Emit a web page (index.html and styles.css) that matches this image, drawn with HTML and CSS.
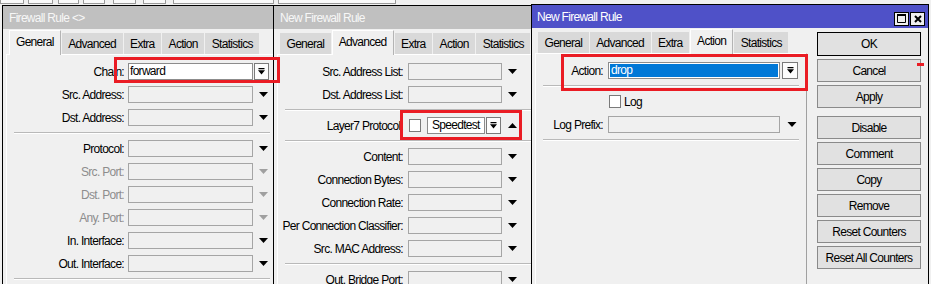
FILE: index.html
```html
<!DOCTYPE html>
<html>
<head>
<meta charset="utf-8">
<title>Firewall Rule</title>
<link rel="stylesheet" href="styles.css">
</head>
<body>
<div class="desktop">
  <div class="toolbar">
    <span class="tb tb-a"></span><span class="tb tb-b"></span><span class="tb tb-c"></span><span class="tb tb-d"></span>
    <span class="tb tb-e"></span><span class="tb tb-f"></span><span class="tb tb-g"></span><span class="tb tb-h"></span>
  </div>

  <!-- Window 1 -->
  <div class="win w1">
    <div class="titlebar"><span class="title">Firewall Rule &lt;&gt;</span></div>
    <div class="winbody">
      <div class="main">
        <div class="tabs">
          <span class="tab active">General</span><span class="tab">Advanced</span><span class="tab">Extra</span><span class="tab">Action</span><span class="tab">Statistics</span>
        </div>
        <div class="panel">
          <div class="row"><span class="lab">Chain:</span><span class="fld val">forward</span><span class="combo"><svg class="cicon" viewBox="0 0 7 7"><path d="M0.5 0h6v1.2h-6zM0 2.2h7L3.5 6.6z"/></svg></span></div>
          <div class="row"><span class="lab">Src. Address:</span><span class="fld"></span><svg class="arrow" viewBox="0 0 9 5"><path d="M0 0H9L4.5 5Z"/></svg></div>
          <div class="row"><span class="lab">Dst. Address:</span><span class="fld"></span><svg class="arrow" viewBox="0 0 9 5"><path d="M0 0H9L4.5 5Z"/></svg></div>
          <div class="sep"></div>
          <div class="row"><span class="lab">Protocol:</span><span class="fld"></span><svg class="arrow" viewBox="0 0 9 5"><path d="M0 0H9L4.5 5Z"/></svg></div>
          <div class="row"><span class="lab dis">Src. Port:</span><span class="fld"></span><svg class="arrow dis" viewBox="0 0 9 5"><path d="M0 0H9L4.5 5Z"/></svg></div>
          <div class="row"><span class="lab dis">Dst. Port:</span><span class="fld"></span><svg class="arrow dis" viewBox="0 0 9 5"><path d="M0 0H9L4.5 5Z"/></svg></div>
          <div class="row"><span class="lab dis">Any. Port:</span><span class="fld"></span><svg class="arrow dis" viewBox="0 0 9 5"><path d="M0 0H9L4.5 5Z"/></svg></div>
          <div class="row"><span class="lab">In. Interface:</span><span class="fld"></span><svg class="arrow" viewBox="0 0 9 5"><path d="M0 0H9L4.5 5Z"/></svg></div>
          <div class="row"><span class="lab">Out. Interface:</span><span class="fld"></span><svg class="arrow" viewBox="0 0 9 5"><path d="M0 0H9L4.5 5Z"/></svg></div>
          <div class="sep"></div>
        </div>
      </div>
    </div>
  </div>

  <!-- Window 2 -->
  <div class="win w2">
    <div class="titlebar"><span class="title">New Firewall Rule</span></div>
    <div class="winbody">
      <div class="main">
        <div class="tabs">
          <span class="tab">General</span><span class="tab active">Advanced</span><span class="tab">Extra</span><span class="tab">Action</span><span class="tab">Statistics</span>
        </div>
        <div class="panel">
          <div class="row"><span class="lab">Src. Address List:</span><span class="fld"></span><svg class="arrow" viewBox="0 0 9 5"><path d="M0 0H9L4.5 5Z"/></svg></div>
          <div class="row"><span class="lab">Dst. Address List:</span><span class="fld"></span><svg class="arrow" viewBox="0 0 9 5"><path d="M0 0H9L4.5 5Z"/></svg></div>
          <div class="sep"></div>
          <div class="row">
            <span class="lab">Layer7 Protocol:</span>
            <span class="group"><span class="chk"></span><span class="fld val short">Speedtest</span><span class="combo"><svg class="cicon" viewBox="0 0 7 7"><path d="M0.5 0h6v1.2h-6zM0 2.2h7L3.5 6.6z"/></svg></span></span>
            <svg class="arrow" viewBox="0 0 9 5"><path d="M0 5H9L4.5 0Z"/></svg>
          </div>
          <div class="sep"></div>
          <div class="row"><span class="lab">Content:</span><span class="fld"></span><svg class="arrow" viewBox="0 0 9 5"><path d="M0 0H9L4.5 5Z"/></svg></div>
          <div class="row"><span class="lab">Connection Bytes:</span><span class="fld"></span><svg class="arrow" viewBox="0 0 9 5"><path d="M0 0H9L4.5 5Z"/></svg></div>
          <div class="row"><span class="lab">Connection Rate:</span><span class="fld"></span><svg class="arrow" viewBox="0 0 9 5"><path d="M0 0H9L4.5 5Z"/></svg></div>
          <div class="row"><span class="lab">Per Connection Classifier:</span><span class="fld"></span><svg class="arrow" viewBox="0 0 9 5"><path d="M0 0H9L4.5 5Z"/></svg></div>
          <div class="row"><span class="lab">Src. MAC Address:</span><span class="fld"></span><svg class="arrow" viewBox="0 0 9 5"><path d="M0 0H9L4.5 5Z"/></svg></div>
          <div class="sep"></div>
          <div class="row"><span class="lab">Out. Bridge Port:</span><span class="fld"></span><svg class="arrow" viewBox="0 0 9 5"><path d="M0 0H9L4.5 5Z"/></svg></div>
        </div>
      </div>
    </div>
  </div>

  <!-- Window 3 -->
  <div class="win w3">
    <div class="titlebar">
      <span class="title">New Firewall Rule</span>
      <span class="tbtns">
        <span class="tbx"><svg width="9" height="9" viewBox="0 0 9 9"><path d="M0.5 1.5h8v7h-8z" fill="none" stroke="#000"/><path d="M0 0h9v2H0z"/></svg></span>
        <span class="tbx"><svg width="8" height="8" viewBox="0 0 8 8"><path d="M1 1L7 7M7 1L1 7" stroke="#000" stroke-width="2"/></svg></span>
      </span>
    </div>
    <div class="winbody">
      <div class="main">
        <div class="tabs">
          <span class="tab">General</span><span class="tab">Advanced</span><span class="tab">Extra</span><span class="tab active">Action</span><span class="tab">Statistics</span>
        </div>
        <div class="panel">
          <div class="row"><span class="lab">Action:</span><span class="fld sel"><span class="seltext">drop</span></span><span class="combo wide"><svg class="cicon" viewBox="0 0 7 7"><path d="M0.5 0h6v1.2h-6zM0 2.2h7L3.5 6.6z"/></svg></span></div>
          <div class="sep"></div>
          <div class="row"><span class="lab"></span><span class="group"><span class="chk"></span><span class="chklab">Log</span></span></div>
          <div class="row"><span class="lab">Log Prefix:</span><span class="fld"></span><svg class="arrow wide" viewBox="0 0 9 5"><path d="M0 0H9L4.5 5Z"/></svg></div>
          <div class="sep"></div>
        </div>
      </div>
      <div class="buttons">
        <span class="btn def">OK</span>
        <span class="btn">Cancel</span>
        <span class="btn">Apply</span>
        <span class="btn spaced">Disable</span>
        <span class="btn">Comment</span>
        <span class="btn">Copy</span>
        <span class="btn">Remove</span>
        <span class="btn">Reset Counters</span>
        <span class="btn">Reset All Counters</span>
      </div>
    </div>
  </div>

  <!-- annotations -->
  <div class="mark m1"></div>
  <div class="mark m2"></div>
  <div class="mark m3"></div>
  <div class="dash"></div>
</div>
</body>
</html>
```
FILE: styles.css
```css
* { box-sizing: border-box; }
html, body { margin: 0; padding: 0; }
body {
  background: #f0f0f0;
  font-family: "Liberation Sans", Arial, sans-serif;
  font-size: 12px;
  letter-spacing: -0.7px;
  color: #000;
}
.desktop {
  position: relative;
  width: 931px;
  height: 284px;
  overflow: hidden;
  background: #f0f0f0;
}

/* partial toolbar at the top */
.toolbar {
  display: flex;
  align-items: flex-end;
  height: 4px;
  overflow: hidden;
}
.tb { flex: none; height: 12px; border: 1px solid #9a9a9a; background: #fafafa; }
.tb-a { width: 24px; margin-left: 0; }
.tb-b { width: 25px; margin-left: 4px; }
.tb-c { width: 21px; margin-left: 5px; }
.tb-d { width: 22px; margin-left: 4px; }
.tb-e { width: 23px; margin-left: 8px; }
.tb-f { width: 23px; margin-left: 7px; }
.tb-g { width: 101px; margin-left: 7px; }
.tb-h { width: 118px; margin-left: 4px; }

/* windows */
.win {
  position: absolute;
  width: 398px;
  height: 300px;
  border: 1px solid #000;
  background: #f0f0f0;
}
.w1 { left: 2px; top: 5px; z-index: 1; }
.w2 { left: 273px; top: 5px; z-index: 2; }
.w3 { left: 531px; top: 4px; z-index: 3; }

.titlebar {
  height: 23px;
  display: flex;
  align-items: center;
  justify-content: space-between;
  padding-left: 6px;
  background: #c0c0c0;
  color: #f7f7f7;
}
.w3 .titlebar { background: #4f51c8; color: #fff; padding-left: 5px; }
.title { white-space: nowrap; }

.tbtns { display: flex; gap: 1px; margin-right: 3px; margin-top: 4px; }
.tbx {
  width: 15px; height: 14px;
  border: 1px solid #000;
  background: #f0f0f0;
  display: flex; align-items: center; justify-content: center;
}

.winbody { display: flex; gap: 10px; padding: 0 7px 0 3px; }
.main { width: 272px; flex: none; }

.tabs {
  display: flex;
  align-items: flex-end;
  gap: 1px;
  height: 25px;
  padding-left: 3px;
}
.tab {
  flex: none;
  height: 21px;
  padding: 0 6.5px;
  display: flex;
  align-items: center;
  background: #d9d9d9;
  white-space: nowrap;
}
.tab.active {
  position: relative;
  z-index: 1;
  height: 25px;
  margin-bottom: -1px;
  padding: 0 6px 2px;
  background: #f0f0f0;
  border: 1px solid #fff;
  border-right-color: #b4b4b4;
  border-bottom: none;
}

.panel {
  height: 262px;
  padding-top: 5px;
  border: 1px solid;
  border-color: #fff #a0a0a0 #a0a0a0 #fff;
}
.w1 .panel { --lab: 121px; --fld: 125px; }
.w2 .panel { --lab: 130px; --fld: 94px; }
.w3 .panel { --lab: 72px; --fld: 172px; }

.row {
  display: grid;
  grid-template-columns: var(--lab) var(--fld) auto;
  align-items: center;
  height: 23px;
}
.lab {
  text-align: right;
  padding-right: 4px;
  white-space: nowrap;
}
.w2 .lab, .w3 .lab { padding-right: 5px; }
.lab.dis { color: #8d8d8d; }

.fld {
  display: block;
  height: 17px;
  border: 1px solid #a5a5a5;
  background: #f0f0f0;
  padding-left: 1px;
  line-height: 15px;
  white-space: nowrap;
  overflow: hidden;
}
.fld.val { background: #fff; border-color: #8c8c8c; }
.fld.short { width: 58px; margin-left: 6px; padding-left: 4px; }
.fld.sel { background: #fff; border-color: #8c8c8c; padding: 1px; }
.seltext {
  display: block;
  height: 13px;
  line-height: 13px;
  background: #0078d7;
  color: #fff;
  padding-left: 1px;
}

.group { display: flex; align-items: center; }
.chk {
  flex: none;
  width: 12px; height: 13px;
  margin-left: 1px;
  border: 1px solid #7a7a7a;
  background: #fff;
}
.chklab { margin-left: 3px; }

.combo {
  flex: none;
  width: 15px;
  height: 17px;
  margin-left: 1px;
  border: 1px solid #7a7a7a;
  background: #fcfcfc;
  display: flex;
  align-items: center;
  justify-content: center;
}
.combo.wide { width: 16px; margin-left: 2px; }
.cicon { width: 7px; height: 7px; fill: #000; display: block; }

.arrow { display: block; width: 9px; height: 5px; margin-left: 6px; fill: #000; }
.arrow.wide { margin-left: 7px; width: 10px; }
.arrow.dis { fill: #a0a0a0; }

.sep {
  height: 2px;
  margin: 3px 7px;
  border-top: 1px solid #b9b9b9;
  border-bottom: 1px solid #fff;
}

/* button column */
.buttons {
  width: 104px;
  flex: none;
  padding-top: 4px;
  display: flex;
  flex-direction: column;
  gap: 3px;
}
.btn {
  height: 23px;
  border: 1px solid #8a8a8a;
  background: #e1e1e1;
  display: flex;
  align-items: center;
  justify-content: center;
  white-space: nowrap;
}
.btn.def { border-color: #000; height: 24px; }
.btn.spaced { margin-top: 5px; }

/* red annotation boxes */
.mark {
  position: absolute;
  z-index: 10;
  border: 3px solid #ea1c24;
}
.m1 { left: 114px; top: 57px; width: 166px; height: 26px; }
.m2 { left: 400px; top: 110px; width: 122px; height: 30px; }
.m3 { left: 561px; top: 54px; width: 247px; height: 37px; }
.dash {
  position: absolute;
  z-index: 10;
  left: 917px; top: 63px;
  width: 7px; height: 3px;
  background: #ea1c24;
}
```
